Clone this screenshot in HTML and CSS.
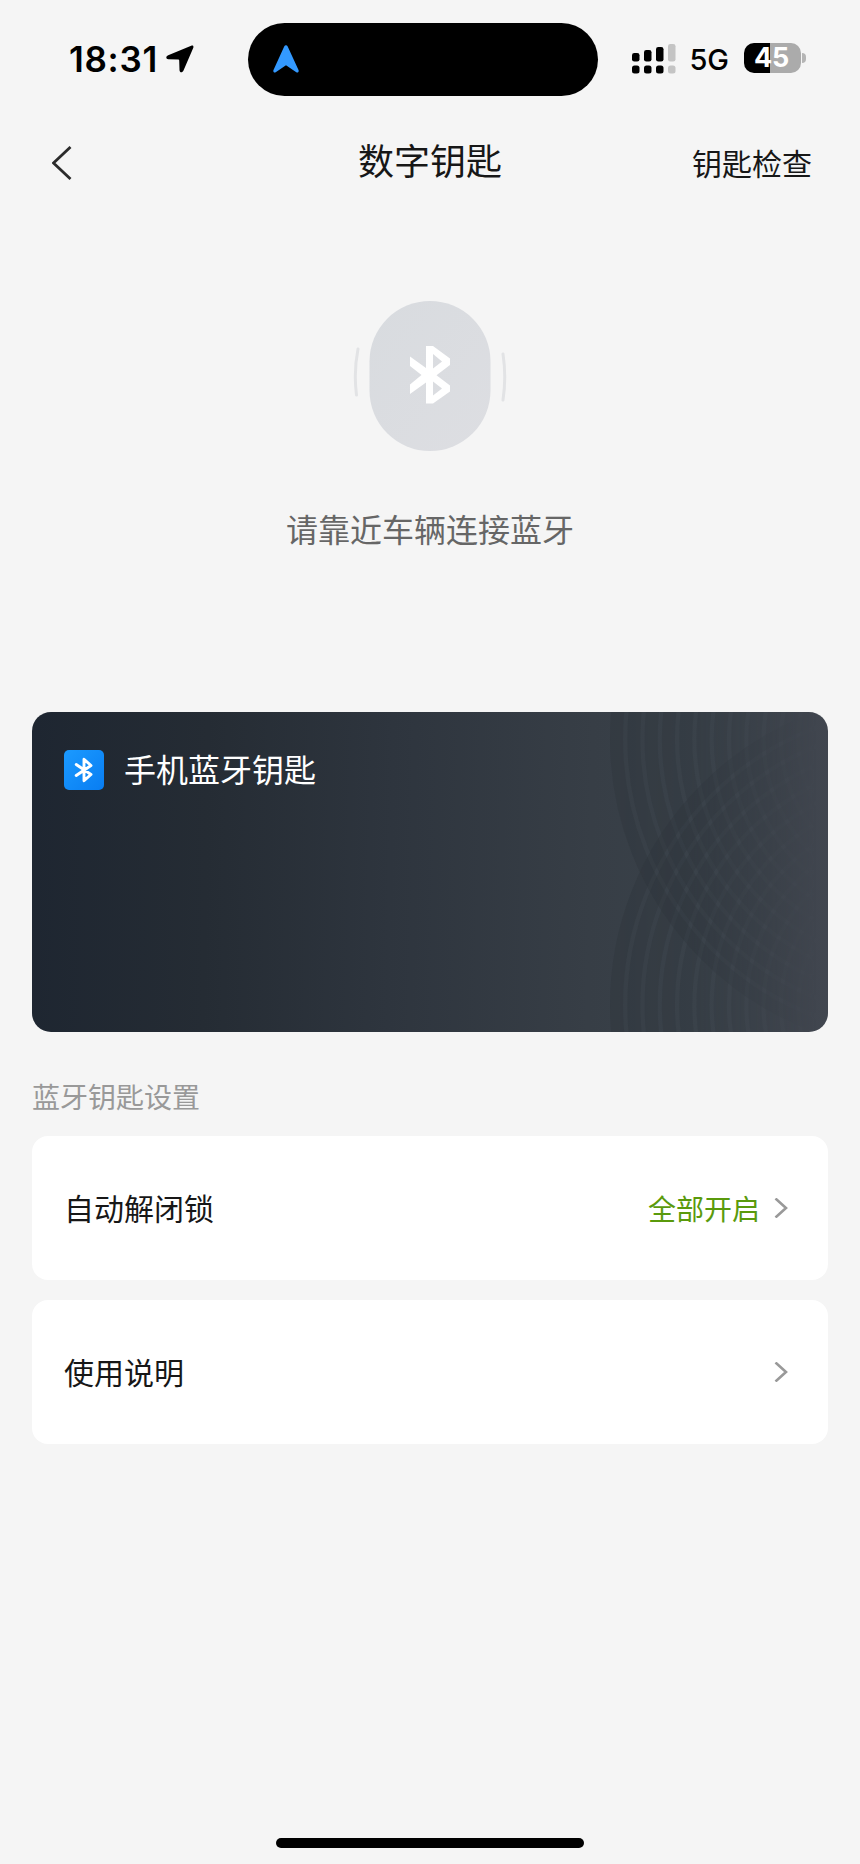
FILE: index.html
```html
<!DOCTYPE html>
<html lang="zh-CN">
<head>
<meta charset="utf-8">
<title>数字钥匙</title>
<link rel="stylesheet" href="styles.css">
</head>
<body>
<div class="screen">
  <header class="status-bar">
    <div class="status-left">
      <span class="time">18:31</span>
      <svg class="location" width="28" height="28" viewBox="0 0 28 28"><path d="M25.2.8 2.2 10.2C-.4 11.3-.3 14 2.3 14.2L12.300 14.500Q13.200 14.500 13.200 15.500L13.500 25C13.600 27.900 16.400 28.100 17.500 25.500L27.200 3.100C27.900 1.200 27 .1 25.200.8Z"/></svg>
    </div>
    <div class="island">
      <svg class="nav-arrow" width="26" height="28" viewBox="0 0 26 28"><path d="M11.200 1.400C12-.2 14-.2 14.700 1.400L25.500 25C26.200 26.800 25 28.100 23.300 27.200L13 20.200 2.700 27.200C1 28.100-.2 26.800.5 25Z"/></svg>
    </div>
    <div class="status-right">
      <svg class="signal" width="44" height="31" viewBox="0 0 44 31">
        <g class="on"><rect y="10" width="7.500" height="8.500" rx="2.300"/><rect y="22.500" width="7.500" height="8" rx="2.500"/><rect x="12" y="7" width="7.500" height="11.500" rx="2.300"/><rect x="12" y="22.500" width="7.500" height="8" rx="2.500"/><rect x="24" y="4" width="7.500" height="14.500" rx="2.300"/><rect x="24" y="22.500" width="7.500" height="8" rx="2.500"/></g>
        <g class="off"><rect x="36" y="1" width="7.500" height="17.500" rx="2.300"/><rect x="36" y="22.500" width="7.500" height="8" rx="2.500"/></g>
      </svg>
      <span class="network">5G</span>
      <div class="battery"><span class="level">45</span></div>
      <i class="battery-tip"></i>
    </div>
  </header>

  <nav class="nav">
    <svg class="back" width="20" height="34" viewBox="0 0 20 34"><path d="M18.500 1 1.500 17 18.500 33"/></svg>
    <h1 class="title">数字钥匙</h1>
    <span class="action">钥匙检查</span>
  </nav>

  <section class="connect">
    <svg class="fob" width="156" height="152" viewBox="0 0 156 152">
      <defs><linearGradient id="fobFill" x1="0" y1="0" x2="1" y2="1"><stop offset="0" stop-color="#d8dbdf"/><stop offset="1" stop-color="#dddee2"/></linearGradient></defs>
      <path class="wave" d="M6 49Q1.500 72 4.500 95M151 54Q154.500 77 151 100"/>
      <rect x="17.500" y="1" width="121" height="150" rx="60.500" fill="url(#fobFill)"/>
      <path class="bt-solid" fill-rule="evenodd" d="M74 46H81L98 58.500V65L84.500 75.200 98 85.500V91.500L81 103.500H74V82.500L58 94V84.500L69.500 75 58 66V56.500L74 68ZM81 54V68.500L90 61.500ZM81 81.500V95.500L90 88.500Z"/>
    </svg>
    <p class="hint">请靠近车辆连接蓝牙</p>
  </section>

  <section class="key-card">
    <svg class="rings" width="228" height="320" viewBox="0 0 228 320">
      <defs>
        <linearGradient id="fade"><stop offset="0" stop-color="#fff"/><stop offset=".4" stop-color="#ddd"/><stop offset=".95" stop-color="#000"/></linearGradient>
        <mask id="fadeMask"><rect width="228" height="320" fill="url(#fade)"/></mask>
        <g id="ringSet">
          <circle r="305.500"/><circle r="288.200"/><circle r="270.900"/><circle r="253.600"/><circle r="236.300"/><circle r="219"/><circle r="201.700"/><circle r="184.400"/><circle r="167.100"/><circle r="149.800"/><circle r="132.500"/><circle r="115.200"/>
        </g>
      </defs>
      <g mask="url(#fadeMask)">
        <use href="#ringSet" x="322" y="27"/>
        <use href="#ringSet" x="322" y="293"/>
      </g>
    </svg>
    <div class="key-head">
      <span class="bt-badge"><svg width="20" height="26" viewBox="0 0 20 26"><path d="M2.200 7.500 17 17.500 10 23.700V2.300L17 8.500 2.200 18.500"/></svg></span>
      <h2 class="key-name">手机蓝牙钥匙</h2>
    </div>
  </section>

  <h3 class="section-label">蓝牙钥匙设置</h3>
  <div class="list">
    <div class="row">
      <span class="row-label">自动解闭锁</span>
      <span class="row-value">全部开启</span>
      <svg class="chevron" width="14" height="20" viewBox="0 0 14 20"><path d="M1.500.5 12 10 1.500 19.500"/></svg>
    </div>
    <div class="row">
      <span class="row-label">使用说明</span>
      <svg class="chevron" width="14" height="20" viewBox="0 0 14 20"><path d="M1.500.5 12 10 1.500 19.500"/></svg>
    </div>
  </div>
  <div class="home-indicator"></div>
</div>
</body>
</html>
```
FILE: styles.css
```css
* { box-sizing: border-box; }
body { margin: 0; background: #f5f5f5; }
h1, h2, h3, p { margin: 0; font-weight: 400; }
svg { display: block; flex: none; }

.screen {
  display: flex;
  flex-direction: column;
  width: 860px;
  height: 1864px;
  padding-bottom: 16px;
  background: #f5f5f5;
  color: #171717;
  font-family: "Noto Sans CJK SC", sans-serif;
}

/* Status bar */
.status-bar {
  display: grid;
  grid-template-columns: 248px 350px 1fr;
  height: 119px;
  padding-top: 22.500px;
  color: #000;
  font-family: Inter, sans-serif;
}
.status-left { display: flex; height: 73px; padding: 0 0 0 69px; align-items: center; }
.time { width: 97px; font-size: 35px; font-weight: 600; line-height: 40px; letter-spacing: .7px; white-space: nowrap; }
.island { height: 73.500px; padding: 22px 25px; border-radius: 37px; background: #000; }
.nav-arrow { fill: #3399ff; }
.status-right { display: flex; height: 73px; padding-left: 33.500px; align-items: center; }
.signal { margin-bottom: 2px; }
.signal .off { fill: #c4c4c4; }
.network { width: 53px; margin-left: 14px; padding-top: 2px; font-size: 29px; font-weight: 500; line-height: 34px; letter-spacing: -.3px; }
.battery {
  width: 57px;
  height: 30px;
  margin-bottom: 2px;
  margin-left: -1px;
  padding-right: 1px;
  flex: none;
  border-radius: 10px;
  background: linear-gradient(90deg, #000 45%, #ababab 45%);
  color: #fff;
  text-align: center;
}
.battery { margin-left: 1px; }
.level { display: block; font-size: 27px; font-weight: 700; line-height: 30px; letter-spacing: -.3px; }
.battery-tip { width: 4px; height: 10px; margin: 0 0 2px 1px; border-radius: 0 5px 5px 0; background: #b5b5b5; }

/* Navigation */
.nav { display: grid; grid-template-columns: 1fr 144px 1fr; height: 86px; padding: 0 48px 0 52px; align-items: center; }
.back { margin-top: 1px; }
.back path { fill: none; stroke: #2b2b2b; stroke-width: 2.800; }
.title { margin-left: -2px; padding-bottom: 6px; font-size: 36px; line-height: 52px; white-space: nowrap; }
.action { justify-self: end; font-size: 30px; line-height: 44px; }

/* Connection state */
.connect { display: flex; flex-direction: column; align-items: center; height: 507px; padding-top: 95px; }
.wave { fill: none; stroke: #e2e3e5; stroke-width: 3; stroke-linecap: round; }
.bt-solid { fill: #fff; }
.hint { margin-top: 52px; color: #666; font-size: 32px; line-height: 48px; }

/* Key card */
.key-card {
  position: relative;
  height: 320px;
  margin: 0 32px;
  padding: 38px 32px;
  overflow: hidden;
  border-radius: 19px;
  background: linear-gradient(91deg, #1e2631 0%, #252c34 22%, #2e353e 45%, #373e46 70%, #3a424a 84%, #41464f 100%);
}
.rings { position: absolute; top: 0; right: 0; }
.rings circle { fill: none; stroke: #2c3239; stroke-opacity: .32; stroke-width: 13; }
.key-head { position: relative; display: flex; align-items: center; height: 40px; gap: 20px; }
.bt-badge { display: flex; width: 40px; height: 40px; align-items: center; justify-content: center; border-radius: 5px; background: linear-gradient(135deg, #1b9aff, #087df2); }
.bt-badge path { fill: none; stroke: #fff; stroke-width: 2.900; stroke-linecap: round; stroke-linejoin: round; }
.key-name { padding-bottom: 4px; color: #fff; font-size: 32px; line-height: 40px; }

/* Settings */
.section-label { margin: 43px 32px 19px; color: #999; font-size: 28px; line-height: 42px; }
.list { display: flex; flex-direction: column; gap: 20px; margin: 0 32px; }
.row { display: flex; align-items: center; height: 144px; padding: 0 40px 0 32px; border-radius: 16px; background: #fff; }
.row-label { flex: 1; padding-bottom: 3px; font-size: 30px; line-height: 44px; }
.row-value { margin-right: 14px; padding-bottom: 1px; color: #5a9a0c; font-size: 28px; line-height: 42px; }
.chevron path { fill: none; stroke: #999; stroke-width: 2.600; }

.home-indicator { width: 308px; height: 10px; margin: auto auto 0; border-radius: 5px; background: #000; }
```
